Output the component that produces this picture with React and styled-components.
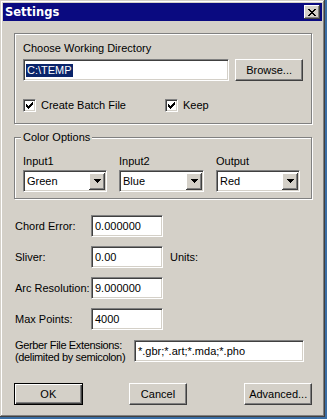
import React from 'react';
import styled, { createGlobalStyle } from 'styled-components';

const face = '#d4d0c8';

const GlobalStyle = createGlobalStyle`
  html, body {
    margin: 0;
    padding: 0;
    background: #3a6ea5;
  }
  body {
    font-family: "Liberation Sans", Arial, sans-serif;
    font-size: 11px;
    color: #000;
  }
`;

const Window = styled.div`
  box-sizing: border-box;
  width: 325px;
  height: 417px;
  padding: 3px;
  background: ${face};
  box-shadow: inset -1px -1px 0 #404040, inset 1px 1px 0 ${face},
    inset -2px -2px 0 #808080, inset 2px 2px 0 #fff;
  display: flex;
  flex-direction: column;
  user-select: none;
`;

const TitleBar = styled.div`
  height: 18px;
  background: #0a0a80;
  display: flex;
  align-items: center;
  justify-content: space-between;
  padding: 0 2px 0 2px;
`;

const Title = styled.span`
  color: #fff;
  font-family: "DejaVu Sans", Verdana, sans-serif;
  font-weight: bold;
  font-size: 11.5px;
`;

const CloseButton = styled.div`
  box-sizing: border-box;
  width: 16px;
  height: 14px;
  background: ${face};
  box-shadow: inset -1px -1px 0 #404040, inset 1px 1px 0 #fff,
    inset -2px -2px 0 #808080;
  display: flex;
  align-items: center;
  justify-content: center;
  padding-right: 1px;
`;

const Body = styled.div`
  flex: 1;
  display: flex;
  flex-direction: column;
  padding: 12px 10px 0 11px;
`;

const Group = styled.div`
  position: relative;
  box-sizing: border-box;
  height: ${p => p.$h}px;
  border: 1px solid #808080;
  box-shadow: inset 1px 1px 0 #fff, 1px 1px 0 #fff;
  padding: ${p => p.$pad};
  margin-top: ${p => p.$mt || 0}px;
  width: 298px;
`;

const Legend = styled.span`
  position: absolute;
  top: -7px;
  left: 6px;
  padding: 0 2px;
  background: ${face};
  line-height: 13px;
`;

const Label = styled.div`
  line-height: 13px;
  white-space: nowrap;
`;

const Row = styled.div`
  display: flex;
  align-items: center;
  margin-top: ${p => p.$mt || 0}px;
`;

const Field = styled.div`
  box-sizing: border-box;
  width: ${p => p.$w}px;
  height: 22px;
  background: #fff;
  border: 1px solid;
  border-color: #808080 #fff #fff #808080;
  box-shadow: inset 1px 1px 0 #404040, inset -1px -1px 0 ${face};
  padding: 0 3px;
  display: flex;
  align-items: center;
  line-height: 13px;
  white-space: nowrap;
`;

const Selected = styled.span`
  background: #0a246a;
  color: #fff;
  padding: 0 1px;
  margin-left: -1px;
`;

const Button = styled.div`
  box-sizing: border-box;
  width: ${p => p.$w}px;
  height: 22px;
  background: ${face};
  display: flex;
  align-items: center;
  justify-content: center;
  margin-left: ${p => p.$ml || 0}px;
  border: 1px solid;
  border-color: ${p => (p.$default ? '#000' : '#fff #404040 #404040 #fff')};
  box-shadow: ${p =>
    p.$default
      ? 'inset 1px 1px 0 #fff, inset -1px -1px 0 #404040, inset -2px -2px 0 #808080'
      : 'inset -1px -1px 0 #808080'};
`;

const CheckRow = styled.label`
  display: flex;
  align-items: center;
  gap: 5px;
  line-height: 13px;
  width: ${p => p.$w}px;
`;

const CheckBox = styled.span`
  box-sizing: border-box;
  width: 13px;
  height: 13px;
  background: #fff;
  border: 1px solid;
  border-color: #808080 #fff #fff #808080;
  box-shadow: inset 1px 1px 0 #404040, inset -1px -1px 0 ${face};
  display: flex;
  align-items: center;
  justify-content: center;
`;

const SelectGrid = styled.div`
  display: grid;
  grid-template-columns: 84px 85px 84px;
  column-gap: 12px;
`;

const SelectCol = styled.div`
  display: flex;
  flex-direction: column;
  gap: 2px;
`;

const SelectBox = styled(Field)`
  padding: 0 2px 0 3px;
  justify-content: space-between;
`;

const ArrowButton = styled.span`
  box-sizing: border-box;
  width: 16px;
  height: 17px;
  background: ${face};
  box-shadow: inset -1px -1px 0 #404040, inset 1px 1px 0 #fff,
    inset -2px -2px 0 #808080;
  display: flex;
  align-items: center;
  justify-content: center;
  margin-right: -1px;
`;

const FieldRows = styled.div`
  display: flex;
  flex-direction: column;
  gap: 9px;
  margin-top: 16px;
  padding-left: 1px;
`;

const FieldLabel = styled.div`
  width: ${p => p.$w || 76}px;
  line-height: 12px;
  white-space: nowrap;
  letter-spacing: ${p => (p.$tight ? '-0.35px' : 'normal')};
`;

const Units = styled.span`
  margin-left: 7px;
`;

const Buttons = styled.div`
  display: flex;
  margin-top: 20px;
`;

const Check = () => (
  <svg width="7" height="7" viewBox="0 0 7 7" shapeRendering="crispEdges">
    <path d="M0 2h1v3h-1zM1 3h1v3h-1zM2 4h1v3h-1zM3 3h1v3h-1zM4 2h1v3h-1zM5 1h1v3h-1zM6 0h1v3h-1z" fill="#000" />
  </svg>
);

const DownArrow = () => (
  <svg width="7" height="4" viewBox="0 0 7 4" shapeRendering="crispEdges">
    <path d="M0 0h7v1h-7zM1 1h5v1h-5zM2 2h3v1h-3zM3 3h1v1h-1z" fill="#000" />
  </svg>
);

const CloseGlyph = () => (
  <svg width="8" height="7" viewBox="0 0 8 7" shapeRendering="crispEdges">
    <path
      d="M0 0h2v1h-2zM6 0h2v1h-2zM1 1h2v1h-2zM5 1h2v1h-2zM2 2h4v1h-4zM3 3h2v1h-2zM2 4h4v1h-4zM1 5h2v1h-2zM5 5h2v1h-2zM0 6h2v1h-2zM6 6h2v1h-2z"
      fill="#000"
    />
  </svg>
);

const Select = ({ label, value }) => (
  <SelectCol>
    <Label>{label}</Label>
    <SelectBox $w={label === 'Input2' ? 85 : 84}>
      {value}
      <ArrowButton>
        <DownArrow />
      </ArrowButton>
    </SelectBox>
  </SelectCol>
);

const fields = [
  { label: 'Chord Error:', value: '0.000000' },
  { label: 'Sliver:', value: '0.00', units: true },
  { label: 'Arc Resolution:', value: '9.000000' },
  { label: 'Max Points:', value: '4000' },
];

const App = () => (
  <>
    <GlobalStyle />
    <Window>
      <TitleBar>
        <Title>Settings</Title>
        <CloseButton>
          <CloseGlyph />
        </CloseButton>
      </TitleBar>
      <Body>
        <Group $h={91} $pad="8px 8px 0 8px">
          <Label>Choose Working Directory</Label>
          <Row $mt={4}>
            <Field $w={207}>
              <Selected>C:\TEMP</Selected>
            </Field>
            <Button $w={68} $ml={6}>Browse...</Button>
          </Row>
          <Row $mt={18}>
            <CheckRow $w={142}>
              <CheckBox>
                <Check />
              </CheckBox>
              Create Batch File
            </CheckRow>
            <CheckRow>
              <CheckBox>
                <Check />
              </CheckBox>
              Keep
            </CheckRow>
          </Row>
        </Group>

        <Group $h={62} $mt={13} $pad="17px 8px 0 8px">
          <Legend>Color Options</Legend>
          <SelectGrid>
            <Select label="Input1" value="Green" />
            <Select label="Input2" value="Blue" />
            <Select label="Output" value="Red" />
          </SelectGrid>
        </Group>

        <FieldRows>
          {fields.map(f => (
            <Row key={f.label}>
              <FieldLabel>{f.label}</FieldLabel>
              <Field $w={72}>{f.value}</Field>
              {f.units && <Units>Units:</Units>}
            </Row>
          ))}
          <Row>
            <FieldLabel $w={119} $tight>
              Gerber File Extensions:
              <br />
              (delimited by semicolon)
            </FieldLabel>
            <Field $w={170}>*.gbr;*.art;*.mda;*.pho</Field>
          </Row>
        </FieldRows>

        <Buttons>
          <Button $w={69} $default>OK</Button>
          <Button $w={59} $ml={46}>Cancel</Button>
          <Button $w={68} $ml={57}>Advanced...</Button>
        </Buttons>
      </Body>
    </Window>
  </>
);

export default App;
